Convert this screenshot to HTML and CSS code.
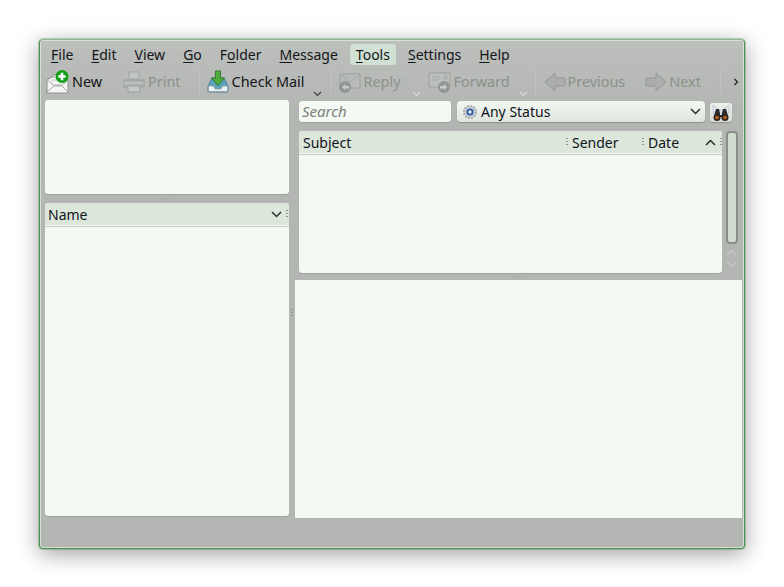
FILE: index.html
```html
<!DOCTYPE html>
<html lang="en">
<head>
<meta charset="utf-8">
<title>KMail</title>
<link rel="stylesheet" href="styles.css">
</head>
<body>
<div class="window">
  <nav class="menubar">
    <span class="menu"><u>F</u>ile</span>
    <span class="menu"><u>E</u>dit</span>
    <span class="menu"><u>V</u>iew</span>
    <span class="menu"><u>G</u>o</span>
    <span class="menu">F<u>o</u>lder</span>
    <span class="menu"><u>M</u>essage</span>
    <span class="menu active"><u>T</u>ools</span>
    <span class="menu"><u>S</u>ettings</span>
    <span class="menu"><u>H</u>elp</span>
  </nav>
  <div class="toolbar">
    <span class="tool t-new">
      <svg class="ico" width="24" height="24" viewBox="0 0 24 24"><path d="M1 10 12 3l10 7v13H1z" fill="#f4f5f3" stroke="#8d918d"/><path d="M1 22l8-7h6l7 7M1 10l8 6h6l7-6" fill="none" stroke="#a3a7a3"/><path d="M5 10h10M6 7.500h8" stroke="#c3c6c3"/><circle cx="16" cy="6.500" r="6.500" fill="#12a017"/><path d="M16 2.800v7.400M12.300 6.500h7.400" stroke="#fff" stroke-width="2.600"/></svg>
      New
    </span>
    <span class="tool t-print off">
      <svg class="ico" width="24" height="24" viewBox="0 0 24 24"><path d="M7 2h10v7H7z" fill="#c4c7c4" stroke="#9b9f9b"/><path d="M2 10h20v7H2z" fill="#aeb1ae" stroke="#989c98"/><path d="M2 13h20" stroke="#d0d3d0"/><path d="M6 16h12v6H6z" fill="#c8cbc8" stroke="#9b9f9b"/></svg>
      Print
    </span>
    <span class="sep s1"></span>
    <span class="tool t-check">
      <svg class="ico" width="24" height="24" viewBox="0 0 24 24"><path d="M6 8h12l4 8v5a1 1 0 0 1-1 1H3a1 1 0 0 1-1-1v-5z" fill="#5ca3bd" stroke="#4d7f93"/><path d="M2.500 16h5l1.500 3h6l1.500-3h5v5.500h-19z" fill="#eef2f2" stroke="#8fa5ad"/><path d="M9.500 1h5v7h4l-6.500 7.500L5.500 8h4z" fill="#4fae3e" stroke="#34792c"/></svg>
      Check Mail
    </span>
    <svg class="drop d-check" width="9" height="6" viewBox="0 0 9 6"><path d="M1 1l3.500 3.500L8 1" fill="none" stroke="#3a3c3a" stroke-width="1.200"/></svg>
    <span class="sep s2"></span>
    <span class="tool t-reply off">
      <svg class="ico" width="24" height="24" viewBox="0 0 24 24"><path d="M2 4h20v14H2z" fill="#b9bcb9" stroke="#989c98"/><path d="M2 4l10 8 10-8" fill="none" stroke="#a1a5a1"/><circle cx="7" cy="17" r="6" fill="#8e928f"/><path d="M4 17l3-3v2h4v2.500H7v1.500z" fill="#cfd1cf"/></svg>
      Reply
    </span>
    <svg class="drop d-reply" width="9" height="6" viewBox="0 0 9 6"><path d="M1 1l3.500 3.500L8 1" fill="none" stroke="#d7dad7" stroke-width="1.200"/></svg>
    <span class="tool t-forward off">
      <svg class="ico" width="24" height="24" viewBox="0 0 24 24"><path d="M1 3h21v14H1z" fill="#bec1be" stroke="#989c98"/><path d="M4 7h8M4 10h6M16 6h3v3h-3z" stroke="#a1a5a1" fill="none"/><circle cx="16" cy="17" r="6" fill="#8e928f"/><path d="M19 17l-3-3v2h-4v2.500h4v1.500z" fill="#cfd1cf"/></svg>
      Forward
    </span>
    <svg class="drop d-forward" width="9" height="6" viewBox="0 0 9 6"><path d="M1 1l3.500 3.500L8 1" fill="none" stroke="#d7dad7" stroke-width="1.200"/></svg>
    <span class="sep s3"></span>
    <span class="tool t-prev off">
      <svg class="ico" width="22" height="20" viewBox="0 0 22 20"><path d="M1 10l10-9v5h10v8H11v5z" fill="#a9aca9" stroke="#8f938f"/></svg>
      Previous
    </span>
    <span class="tool t-next off">
      <svg class="ico" width="22" height="20" viewBox="0 0 22 20"><path d="M21 10L11 1v5H1v8h10v5z" fill="#a9aca9" stroke="#8f938f"/></svg>
      Next
    </span>
    <span class="sep s4"></span>
    <svg class="more" width="6" height="8" viewBox="0 0 6 8"><path d="M1.500 1l3 3-3 3" fill="none" stroke="#222" stroke-width="1.300"/></svg>
  </div>
  <div class="main">
    <div class="left">
      <div class="panel favorites"></div>
      <div class="split-h"><i></i></div>
      <div class="panel tree">
        <div class="head name-head">
          <span>Name</span>
          <svg class="chev" width="11" height="7" viewBox="0 0 11 7"><path d="M1 1l4.500 4.500L10 1" fill="none" stroke="#2c2e2c" stroke-width="1.500"/></svg>
          <span class="grip"></span>
        </div>
      </div>
    </div>
    <div class="split-v"><i></i></div>
    <div class="right">
      <div class="filters">
        <div class="search">Search</div>
        <div class="combo">
          <svg class="gear" width="16" height="16" viewBox="0 0 16 16"><circle cx="8" cy="8" r="6.200" fill="#c9cdd0" stroke="#a9aeb2" stroke-width="1.800" stroke-dasharray="2 1.200"/><circle cx="8" cy="8" r="3.600" fill="#2f5fa8"/><circle cx="8" cy="8" r="1.700" fill="#e6eaf0"/></svg>
          <span class="combo-text">Any Status</span>
          <svg class="chev" width="11" height="7" viewBox="0 0 11 7"><path d="M1 1l4.500 4.500L10 1" fill="none" stroke="#2c2e2c" stroke-width="1.500"/></svg>
        </div>
        <div class="binbtn">
          <svg width="18" height="18" viewBox="0 0 18 18"><path d="M1 1l8 6 8-6v8H1z" fill="#dfe6ee" stroke="#aeb8c2" stroke-width=".6"/><path d="M4 5h3l1 4v2h2V9l1-4h3l2 7H10v1H8v-1H2z" fill="#2b2b2b"/><circle cx="5" cy="13.500" r="3.500" fill="#30261c"/><circle cx="13" cy="13.500" r="3.500" fill="#30261c"/><circle cx="5" cy="13.500" r="1.800" fill="#b5641f"/><circle cx="13" cy="13.500" r="1.800" fill="#b5641f"/></svg>
        </div>
      </div>
      <div class="listrow">
        <div class="panel list">
          <div class="head list-head">
            <span class="c-subject">Subject</span>
            <span class="grip"></span>
            <span class="c-sender">Sender</span>
            <span class="grip"></span>
            <span class="c-date">Date</span>
            <svg class="chev" width="11" height="7" viewBox="0 0 11 7"><path d="M1 6l4.500-4.500L10 6" fill="none" stroke="#2c2e2c" stroke-width="1.500"/></svg>
            <span class="grip end"></span>
          </div>
        </div>
        <div class="scroll">
          <div class="thumb"></div>
          <svg class="arrow" width="11" height="7" viewBox="0 0 11 7"><path d="M1 6l4.500-4.500L10 6" fill="none" stroke="#c5c8c5" stroke-width="1.400"/></svg>
          <svg class="arrow" width="11" height="7" viewBox="0 0 11 7"><path d="M1 1l4.500 4.500L10 1" fill="none" stroke="#c5c8c5" stroke-width="1.400"/></svg>
        </div>
      </div>
      <div class="split-h narrow"><i></i></div>
      <div class="preview"></div>
    </div>
  </div>
</div>
</body>
</html>
```
FILE: styles.css
```css
* { box-sizing: border-box; }
html, body { margin: 0; height: 100%; background: #fff; overflow: hidden; }
body { padding: 39px 0 0 39px; font-family: "Noto Sans", sans-serif; font-size: 14px; color: #14161a; }
u { text-underline-offset: 2px; text-decoration-thickness: 1px; }
.window {
  width: 706px; height: 510px; display: flex; flex-direction: column;
  border: 1px solid #4f8f55; border-top-color: #8fb894; border-radius: 4px;
  box-shadow: 0 0 0 1px rgba(90,150,95,.4), 0 5px 22px rgba(0,0,0,.38), inset 0 0 0 1px rgba(226,236,224,.75);
  background: linear-gradient(#bcbfbb, #b3b6b2 70px);
}
.menubar { display: flex; height: 25px; padding: 4px 0 0 5px; flex: none; }
.menu { height: 21px; line-height: 21px; padding: 0 6px; margin-right: 6px; border-radius: 3px; white-space: nowrap; }
.menu:last-child { margin-right: 0; }
.menu.active { background: #d0e0d2; }
.toolbar { height: 35px; flex: none; display: flex; align-items: center; padding-bottom: 2px; }
.tool { display: flex; align-items: center; gap: 2px; white-space: nowrap; height: 26px; font-size: 14.400px; }
.off { color: #8d918d; }
.off svg { opacity: .85; }
.ico { flex: none; }
.drop { flex: none; align-self: flex-end; margin-bottom: 1px; }
.sep { width: 2px; height: 24px; flex: none; background: linear-gradient(90deg, #aeb1ad, #c5c8c4); }
.t-new { margin-left: 6px; }
.t-print { margin-left: 20px; }
.s1 { margin-left: 17px; }
.t-check { margin-left: 6px; }
.d-check { margin-left: 8px; }
.s2 { margin-left: 7px; }
.t-reply { margin-left: 7px; }
.d-reply { margin-left: 11px; }
.t-forward { margin-left: 7px; }
.d-forward { margin-left: 9px; }
.s3 { margin-left: 6px; }
.t-prev { margin-left: 8px; }
.t-next { margin-left: 20px; }
.s4 { margin-left: 18px; }
.more { margin-left: 12px; flex: none; }
.main { display: flex; height: 418px; padding-left: 5px; flex: none; }
.left { width: 244px; display: flex; flex-direction: column; flex: none; padding-bottom: 2px; }
.panel { background: #f4f9f3; border-radius: 3px; box-shadow: 0 1px 0 #a0a3a0; }
.favorites { height: 94px; flex: none; }
.split-h { height: 9px; flex: none; display: flex; align-items: center; justify-content: center; }
.split-h i { width: 8px; height: 1px; background-image: repeating-linear-gradient(90deg, #8f928f 0 1px, transparent 1px 3px); }
.tree { flex: 1; }
.head { display: flex; align-items: center; height: 23px; background: #dce6db; border-bottom: 1px solid #f4f9f3; box-shadow: 0 1px 0 #c4ccc3; border-radius: 3px 3px 0 0; color: #10141c; }
.name-head { padding: 0 0 0 3px; }
.name-head .chev { margin-left: auto; margin-right: -1px; }
.name-head .grip { margin: 0 1px 0 5px; }
.grip { width: 2px; height: 9px; flex: none; background-image: repeating-linear-gradient(#8f928f 0 1px, transparent 1px 3px); }
.split-v { width: 6px; flex: none; display: flex; align-items: center; justify-content: center; padding-top: 8px; }
.split-v i { width: 2px; height: 8px; background-image: repeating-linear-gradient(#8f928f 0 1px, transparent 1px 3px); }
.right { width: 447px; flex: none; display: flex; flex-direction: column; }
.filters { height: 31px; flex: none; display: flex; padding: 1px 0 0 4px; }
.search { width: 152px; height: 21px; background: #f4f9f3; border-radius: 3px; box-shadow: 0 1px 1px #9ea19e; font-style: italic; font-size: 15px; color: #7c807c; line-height: 20px; padding-left: 3px; }
.combo { width: 248px; height: 21px; margin-left: 6px; background: linear-gradient(#f3f7f2, #dfe6de); border-radius: 4px; box-shadow: 0 1px 1px #8e918e; display: flex; align-items: center; padding: 0 4px 0 5px; }
.gear { flex: none; }
.combo-text { margin-left: 3px; color: #10141c; }
.combo .chev { margin-left: auto; }
.binbtn { width: 22px; height: 19px; margin: 2px 0 0 5px; background: linear-gradient(#eef2ed, #d7ddd6); border-radius: 3px; box-shadow: 0 1px 1px #8e918e; display: flex; align-items: center; justify-content: center; }
.listrow { display: flex; height: 142px; flex: none; padding-left: 4px; }
.list { width: 423px; flex: none; }
.list-head { padding-left: 4px; }
.c-subject { width: 263px; }
.c-sender { width: 70px; margin-left: 4px; }
.c-date { margin-left: 4px; width: 57px; }
.list-head .grip.end { margin-left: 4px; }
.scroll { width: 13px; margin-left: 3px; display: flex; flex-direction: column; align-items: center; }
.thumb { width: 12px; height: 113px; flex: none; background: #d1decf; border: 2px solid #8b8e8b; border-radius: 4px; margin-bottom: 5px; }
.arrow { flex: none; margin-bottom: 5px; }
.narrow { height: 7px; }
.preview { flex: 1; background: #f4f9f3; }
```
